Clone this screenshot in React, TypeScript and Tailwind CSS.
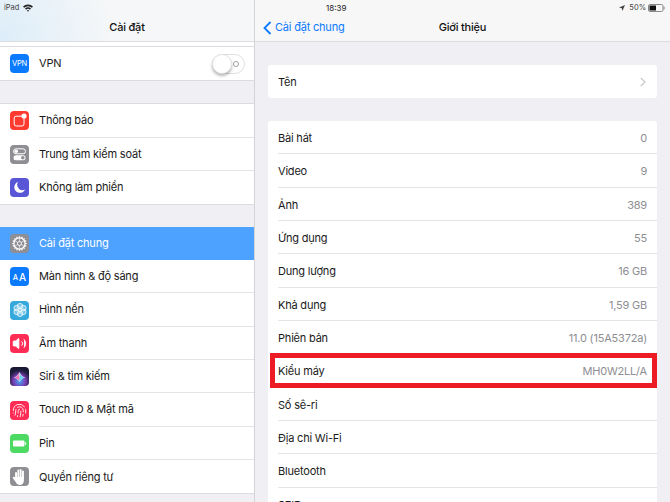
import { ReactNode } from "react";
import { Fingerprint, Volume2 } from "lucide-react";

const fontClass = "font-['Inter','Liberation_Sans',sans-serif]";

function IconBox({ color, children }: { color: string; children: ReactNode }) {
  return (
    <div className={`w-[19px] h-[19px] rounded-[4px] flex items-center justify-center shrink-0 overflow-hidden text-white tracking-normal ${color}`}>
      {children}
    </div>
  );
}

function SideRow({
  icon,
  label,
  last,
  selected,
  children,
}: {
  icon: ReactNode;
  label: string;
  last?: boolean;
  selected?: boolean;
  children?: ReactNode;
}) {
  return (
    <div className={`h-[33.33px] flex items-center pl-[10px] ${selected ? "bg-[#4da2ff]" : ""}`}>
      {icon}
      <div
        className={`ml-[10px] flex-1 h-full flex items-center justify-between ${
          last || selected ? "" : "border-b border-[#e4e4e7]"
        } ${selected ? "text-white" : "text-[#1a1a1a]"}`}
      >
        <span>{label}</span>
        {children}
      </div>
    </div>
  );
}

function InfoRow({ label, value, last }: { label: string; value?: string; last?: boolean }) {
  return (
    <div className="h-[33.33px] pl-[10px]">
      <div className={`h-full flex items-center justify-between pt-[2px] pr-[10px] ${last ? "" : "border-b border-[#e4e4e7]"}`}>
        <span className="text-[#1a1a1a]">{label}</span>
        {value && <span className="text-[#8e8e93]">{value}</span>}
      </div>
    </div>
  );
}

function Chevron() {
  return (
    <svg width="6" height="10" viewBox="0 0 6 10" fill="none" stroke="#c7c7cc" strokeWidth="1.2">
      <path d="M0.8 1 L5 5 L0.8 9" />
    </svg>
  );
}

function GearGlyph() {
  const teeth = Array.from({ length: 16 }, (_, i) => i * 22.5);
  return (
    <svg width="17" height="17" viewBox="0 0 17 17" fill="none" stroke="white">
      <circle cx="8.5" cy="8.5" r="5.6" strokeWidth="1.3" />
      <circle cx="8.5" cy="8.5" r="2" strokeWidth="0.9" />
      {teeth.map((a) => (
        <line key={a} x1="8.5" y1="1.2" x2="8.5" y2="3" strokeWidth="1.2" transform={`rotate(${a} 8.5 8.5)`} />
      ))}
      {[0, 60, 120, 180, 240, 300].map((a) => (
        <line key={a} x1="8.5" y1="3.4" x2="8.5" y2="6.5" strokeWidth="0.6" transform={`rotate(${a} 8.5 8.5)`} />
      ))}
    </svg>
  );
}

function HandGlyph() {
  return (
    <svg width="15" height="17" viewBox="0 0 15 17" fill="white">
      <rect x="3.1" y="4" width="1.9" height="8" rx="0.95" />
      <rect x="5.4" y="1.6" width="1.9" height="9" rx="0.95" />
      <rect x="7.7" y="1" width="1.9" height="9.5" rx="0.95" />
      <rect x="10" y="2.6" width="1.9" height="8.5" rx="0.95" />
      <path d="M3.1 9 H11.9 V12.5 C11.9 15 10.2 17 7.8 17 C5.8 17 4.8 16 3.8 14.3 L0.9 10.2 C0.3 9.2 1.6 8.2 2.4 9 Z" />
    </svg>
  );
}

export default function App() {
  return (
    <div className={`w-[670px] h-[502px] overflow-hidden flex bg-[#efeff4] text-[11px] tracking-[-0.2px] ${fontClass}`}>
      {/* Left pane */}
      <div className="w-[255px] shrink-0 h-full border-r border-[#d4d4d8] overflow-hidden">
        <div className="h-[42px] border-b border-[#dcdcdf] bg-[radial-gradient(circle_at_0%_100%,#dcedf9,#f6f7f8_45%)]">
          <div className="h-[15px] flex items-center pl-[4px] gap-[4px] text-[7.5px] text-[#444] tracking-normal">
            <span>iPad</span>
            <svg width="10" height="8" viewBox="0 0 10 8" fill="#222">
              <path d="M0 2.6 A7 7 0 0 1 10 2.6 L8.8 3.8 A5.3 5.3 0 0 0 1.2 3.8 Z M2 4.6 A4.2 4.2 0 0 1 8 4.6 L6.9 5.7 A2.7 2.7 0 0 0 3.1 5.7 Z M3.9 6.5 A1.6 1.6 0 0 1 6.1 6.5 L5 7.7 Z" />
            </svg>
          </div>
          <div className="h-[25px] flex items-center justify-center font-medium text-[#111]">Cài đặt</div>
        </div>
        <div className="h-[4px] bg-white border-b border-transparent" />
        <div className="bg-white border-y border-[#dcdce0] ml-0">
          <SideRow
            label="VPN"
            last
            icon={
              <IconBox color="bg-[#0a7aff]">
                <span className="text-[7.5px] tracking-[-0.2px]">VPN</span>
              </IconBox>
            }
          >
            <div className="w-[33px] h-[20px] mr-[9px] rounded-full border border-[#e0e0e2] bg-white flex items-center justify-end pr-[5px] relative">
              <div className="w-[6px] h-[6px] rounded-full border border-[#a0a0a4]" />
              <div className="absolute -left-[1px] -top-[1px] w-[20px] h-[20px] rounded-full bg-white border border-[#e4e4e4] shadow-[0_2px_3px_rgba(0,0,0,0.3)]" />
            </div>
          </SideRow>
        </div>
        <div className="h-[22px]" />
        <div className="bg-white border-y border-[#dcdce0]">
          <SideRow
            label="Thông báo"
            icon={
              <IconBox color="bg-[#ff3b30]">
                <svg width="15" height="15" viewBox="0 0 15 15" fill="none">
                  <rect x="2.2" y="3.2" width="9.8" height="9.8" rx="2" stroke="white" strokeWidth="1" />
                  <circle cx="12" cy="3" r="2.6" fill="white" />
                </svg>
              </IconBox>
            }
          />
          <SideRow
            label="Trung tâm kiểm soát"
            icon={
              <IconBox color="bg-[#8e8e93]">
                <svg width="15" height="15" viewBox="0 0 15 15" fill="none">
                  <rect x="1.5" y="1.8" width="12" height="5" rx="2.5" stroke="white" strokeWidth="1" />
                  <circle cx="4.2" cy="4.3" r="1.8" fill="white" />
                  <rect x="1.5" y="8.2" width="12" height="5" rx="2.5" fill="white" />
                  <circle cx="10.8" cy="10.7" r="1.8" fill="#8e8e93" />
                </svg>
              </IconBox>
            }
          />
          <SideRow
            label="Không làm phiền"
            last
            icon={
              <IconBox color="bg-[#5856d6]">
                <svg width="13" height="13" viewBox="0 0 13 13" fill="white">
                  <path d="M5 1 A5.6 5.6 0 1 0 12 8.6 A5.4 5.4 0 0 1 5 1 Z" />
                </svg>
              </IconBox>
            }
          />
        </div>
        <div className="h-[21.5px]" />
        <div className="bg-white border-b border-[#dcdce0]">
          <SideRow
            label="Cài đặt chung"
            selected
            icon={
              <IconBox color="bg-[#8e8e93]">
                <GearGlyph />
              </IconBox>
            }
          />
          <SideRow
            label="Màn hình & độ sáng"
            icon={
              <IconBox color="bg-[#0a7aff]">
                <span className="text-[10px] font-medium leading-none flex items-end gap-[1px]">
                  <span className="text-[7.5px]">A</span>
                  <span>A</span>
                </span>
              </IconBox>
            }
          />
          <SideRow
            label="Hình nền"
            icon={
              <IconBox color="bg-[#35a9dc]">
                <svg width="16" height="16" viewBox="0 0 16 16" fill="white" fillOpacity="0.3" stroke="white" strokeWidth="0.7">
                  <circle cx="8" cy="4.2" r="2.8" />
                  <circle cx="8" cy="11.8" r="2.8" />
                  <circle cx="4.7" cy="6.1" r="2.8" />
                  <circle cx="11.3" cy="6.1" r="2.8" />
                  <circle cx="4.7" cy="9.9" r="2.8" />
                  <circle cx="11.3" cy="9.9" r="2.8" />
                </svg>
              </IconBox>
            }
          />
          <SideRow
            label="Âm thanh"
            icon={
              <IconBox color="bg-[#ff2d55]">
                <Volume2 size={15} fill="white" strokeWidth={1.5} />
              </IconBox>
            }
          />
          <SideRow
            label="Siri & tìm kiếm"
            icon={
              <IconBox color="bg-[radial-gradient(circle_at_50%_75%,#3fa9f5,#7a3fb5_35%,#1c1c3c_65%,#141428)]">
                <svg width="15" height="15" viewBox="0 0 15 15">
                  <path d="M1.5 8.5 Q5 8 7.5 3 Q10 8 13.5 8.5 Q10 9 7.5 13 Q5 9 1.5 8.5 Z" fill="#ffffff" fillOpacity="0.75" />
                  <path d="M3 8.5 Q6 8 7 5 Q7.5 9 7.5 12 Q5 9.5 3 8.5 Z" fill="#ff4f9a" fillOpacity="0.7" />
                  <path d="M12 8.5 Q9 8 8 5 Q7.5 9 7.5 12 Q10 9.5 12 8.5 Z" fill="#39d5e8" fillOpacity="0.7" />
                </svg>
              </IconBox>
            }
          />
          <SideRow
            label="Touch ID & Mật mã"
            icon={
              <IconBox color="bg-[#ff2d55]">
                <Fingerprint size={15} strokeWidth={1.4} />
              </IconBox>
            }
          />
          <SideRow
            label="Pin"
            icon={
              <IconBox color="bg-[#4cd964]">
                <svg width="15" height="15" viewBox="0 0 15 15" fill="white">
                  <rect x="1" y="4.5" width="11.5" height="6" rx="1" />
                  <rect x="13" y="6.3" width="1.2" height="2.4" rx="0.4" />
                </svg>
              </IconBox>
            }
          />
          <SideRow
            label="Quyền riêng tư"
            last
            icon={
              <IconBox color="bg-[#8e8e93]">
                <HandGlyph />
              </IconBox>
            }
          />
        </div>
      </div>

      {/* Right pane */}
      <div className="flex-1 h-full relative overflow-hidden">
        <div className="h-[42px] border-b border-[#dcdcdf] bg-[#f7f7f8]">
          <div className="h-[15px] relative flex items-center justify-end pr-[5px] gap-[2px] text-[7.5px] text-[#444] tracking-normal">
            <span className="absolute left-[71px] text-[8px] text-[#222]">18:39</span>
            <svg width="6" height="6" viewBox="0 0 6 6" fill="#444" className="mr-[2px]">
              <path d="M6 0 L0 2.6 L2.8 3.2 L3.4 6 Z" />
            </svg>
            <span>50%</span>
            <svg width="17" height="8" viewBox="0 0 17 8" fill="none">
              <rect x="0.5" y="0.5" width="14.5" height="7" rx="1.5" stroke="#888" />
              <rect x="1.5" y="1.5" width="6.5" height="5" fill="#111" />
              <rect x="15.6" y="2.7" width="1" height="2.6" fill="#888" />
            </svg>
          </div>
          <div className="h-[25px] relative flex items-center justify-center font-medium text-[#111]">
            <div className="absolute left-[8px] flex items-center gap-[3px] text-[#0a7aff] font-normal">
              <svg width="9" height="14" viewBox="0 0 9 14" fill="none" stroke="#0a7aff" strokeWidth="1.8">
                <path d="M7.5 1 L1.5 7 L7.5 13" />
              </svg>
              <span>Cài đặt chung</span>
            </div>
            Giới thiệu
          </div>
        </div>

        <div className="px-[13px]">
          <div className="mt-[23px] bg-white rounded-[3px]">
            <div className="h-[33px] flex items-center justify-between pt-[1px] pl-[10px] pr-[11px]">
              <span className="text-[#1a1a1a]">Tên</span>
              <Chevron />
            </div>
          </div>
          <div className="mt-[23px] bg-white rounded-[3px]">
            <InfoRow label="Bài hát" value="0" />
            <InfoRow label="Video" value="9" />
            <InfoRow label="Ảnh" value="389" />
            <InfoRow label="Ứng dụng" value="55" />
            <InfoRow label="Dung lượng" value="16 GB" />
            <InfoRow label="Khả dụng" value="1,59 GB" />
            <InfoRow label="Phiên bản" value="11.0 (15A5372a)" />
            <InfoRow label="Kiểu máy" value="MH0W2LL/A" />
            <InfoRow label="Số sê-ri" />
            <InfoRow label="Địa chỉ Wi-Fi" />
            <InfoRow label="Bluetooth" />
            <InfoRow label="SEID" />
          </div>
        </div>

        {/* red highlight drawn over the screenshot */}
        <div className="absolute left-[15px] top-[353px] w-[387px] h-[35px] border-[5px] border-[#ed1c24]" />
      </div>
    </div>
  );
}
